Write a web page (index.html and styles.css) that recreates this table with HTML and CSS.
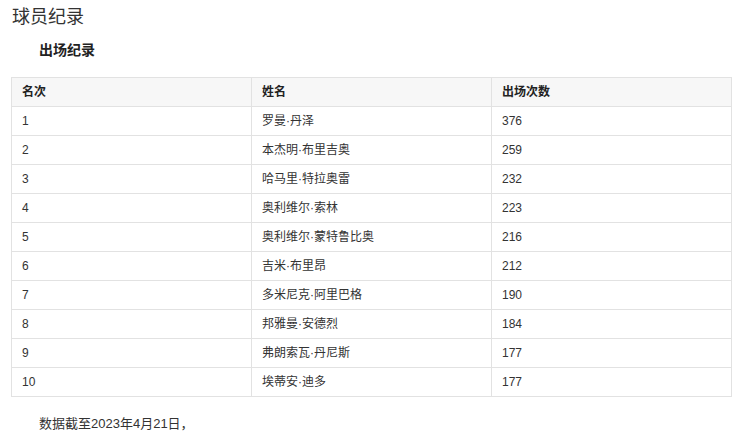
FILE: index.html
```html
<!DOCTYPE html>
<html lang="zh">
<head>
<meta charset="utf-8">
<link rel="stylesheet" href="styles.css">
</head>
<body>
<h1 class="title">球员纪录</h1>
<h2 class="subtitle">出场纪录</h2>
<table class="records">
  <thead>
    <tr><th>名次</th><th>姓名</th><th>出场次数</th></tr>
  </thead>
  <tbody>
    <tr><td>1</td><td>罗曼·丹泽</td><td>376</td></tr>
    <tr><td>2</td><td>本杰明·布里吉奥</td><td>259</td></tr>
    <tr><td>3</td><td>哈马里·特拉奥雷</td><td>232</td></tr>
    <tr><td>4</td><td>奥利维尔·索林</td><td>223</td></tr>
    <tr><td>5</td><td>奥利维尔·蒙特鲁比奥</td><td>216</td></tr>
    <tr><td>6</td><td>吉米·布里昂</td><td>212</td></tr>
    <tr><td>7</td><td>多米尼克·阿里巴格</td><td>190</td></tr>
    <tr><td>8</td><td>邦雅曼·安德烈</td><td>184</td></tr>
    <tr><td>9</td><td>弗朗索瓦·丹尼斯</td><td>177</td></tr>
    <tr><td>10</td><td>埃蒂安·迪多</td><td>177</td></tr>
  </tbody>
</table>
<p class="note">数据截至2023年4月21日，</p>
</body>
</html>
```
FILE: styles.css
```css
html, body {
  margin: 0;
  padding: 0;
  background: #fff;
}
body {
  font-family: "Liberation Sans", "Noto Sans CJK SC", sans-serif;
  color: #333;
  padding: 0 0 0 11px;
}
.title {
  font-size: 18px;
  font-weight: normal;
  line-height: 24px;
  margin: 5px 0 0 1px;
  color: #333;
}
.subtitle {
  font-size: 14px;
  font-weight: bold;
  line-height: 20px;
  margin: 11px 0 0 28px;
  color: #222;
}
.records {
  margin-top: 17px;
  width: 721px;
  border-collapse: collapse;
  table-layout: fixed;
  font-size: 12px;
}
.records th,
.records td {
  border: 1px solid #e2e2e2;
  line-height: 28px;
  padding: 0 10px;
  text-align: left;
  color: #333;
}
.records th {
  background: #f7f7f7;
  font-weight: bold;
  color: #222;
}
.note {
  margin: 17px 0 0 28px;
  font-size: 13px;
  line-height: 20px;
  color: #333;
}
```
